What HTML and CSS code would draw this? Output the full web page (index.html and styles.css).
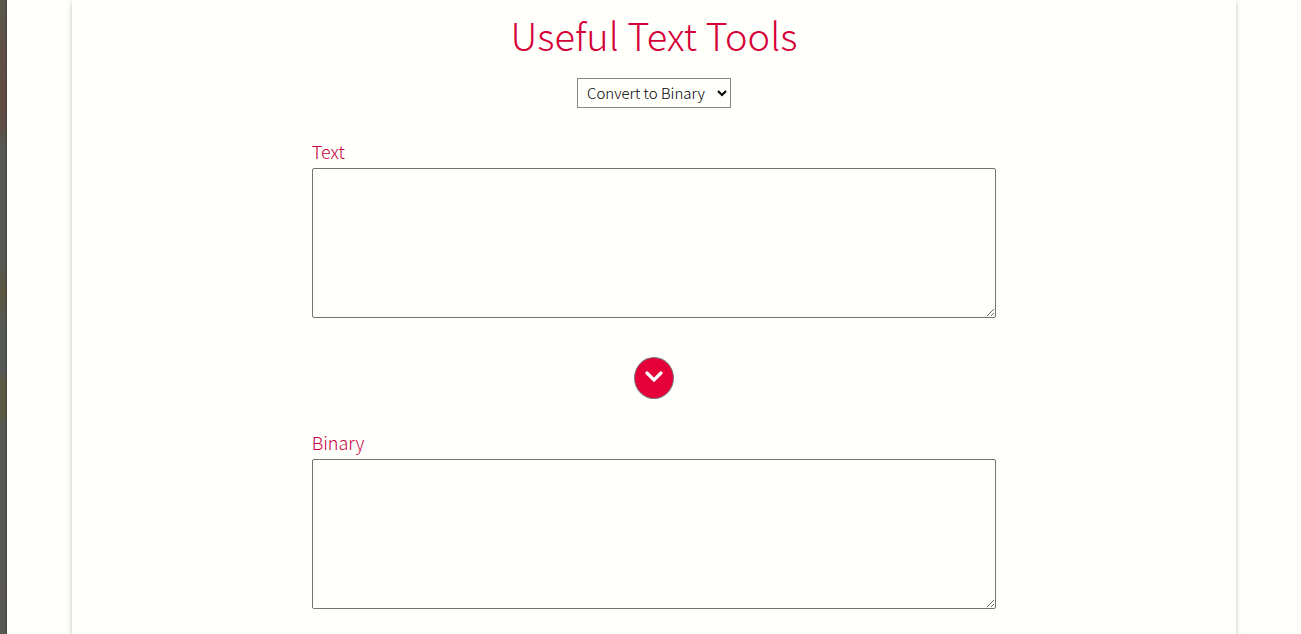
FILE: index.html
```html
<!DOCTYPE html>
<html lang="en">
<head>
<meta charset="utf-8">
<title>Useful Text Tools</title>
<link rel="stylesheet" href="styles.css">
</head>
<body>
<div class="page">
  <main class="panel">
    <h1 class="title">Useful Text Tools</h1>
    <select class="tool-select" aria-label="Tool">
      <option>Convert to Binary</option>
    </select>
    <form class="converter">
      <div class="field">
        <label class="label" for="text">Text</label>
        <textarea class="box" id="text"></textarea>
      </div>
      <button class="convert" type="button" aria-label="Convert">
        <svg class="chevron" viewBox="0 0 18 12" aria-hidden="true"><path d="M2 2l7 7 7-7" fill="none" stroke="currentColor" stroke-width="3.2" stroke-linecap="round" stroke-linejoin="miter"/></svg>
      </button>
      <div class="field">
        <label class="label" for="binary">Binary</label>
        <textarea class="box" id="binary"></textarea>
      </div>
    </form>
  </main>
</div>
</body>
</html>
```
FILE: styles.css
```css
* {
  box-sizing: border-box;
}

body {
  display: flex;
  min-height: 100vh;
  margin: 0;
  padding-left: 7px;
  background: linear-gradient(#59594b 0, #5f5148 40px, #624b41 100px, #5f4e44 125px, #565953 145px, #565953 260px, #5b5540 290px, #565a56 330px, #565a56 370px, #5c5a43 385px, #5c5a43 415px, #565853 425px, #565853 580px, #5b5550 590px, #565853 610px);
  font-family: "Noto Sans CJK SC", "Open Sans", sans-serif;
  font-weight: 300;
}

.page {
  display: flex;
  flex: 1;
  padding: 0 5%;
  background: #fffffc;
  box-shadow: 0 0 2px #222;
  overflow: hidden;
}

.panel {
  display: flex;
  flex: 1;
  flex-direction: column;
  align-items: center;
  padding: 5px 240px 24px;
  box-shadow: 0 2px 5px rgba(0, 0, 0, 0.25);
}

.title {
  margin: 0 0 13px;
  color: #d50037;
  font-size: 38px;
  font-weight: 300;
  line-height: 60px;
}

.tool-select {
  width: 154px;
  height: 30px;
  padding: 0 0 2px 5px;
  border: 1px solid #858583;
  border-radius: 0;
  background: #fffffc;
  color: #000;
  font: 300 15px "Noto Sans CJK SC", "Open Sans", sans-serif;
}

.converter {
  display: flex;
  flex-direction: column;
  align-items: center;
  align-self: stretch;
  margin-top: 29px;
}

.field {
  display: flex;
  flex-direction: column;
  align-self: stretch;
}

.label {
  padding-bottom: 3px;
  color: #c6003e;
  font-size: 18px;
  line-height: 28px;
}

.box {
  height: 150px;
  border: 1px solid #73736f;
  border-radius: 2px;
  background: #fffffc;
  font: inherit;
}

.convert {
  display: flex;
  align-items: center;
  justify-content: center;
  width: 40px;
  height: 42px;
  margin: 39px 0 29px;
  padding: 0 0 2px;
  border: 1px solid #777;
  border-radius: 50%;
  background: #e60039;
  color: #fff;
}

.chevron {
  width: 18px;
  height: 12px;
}
```
